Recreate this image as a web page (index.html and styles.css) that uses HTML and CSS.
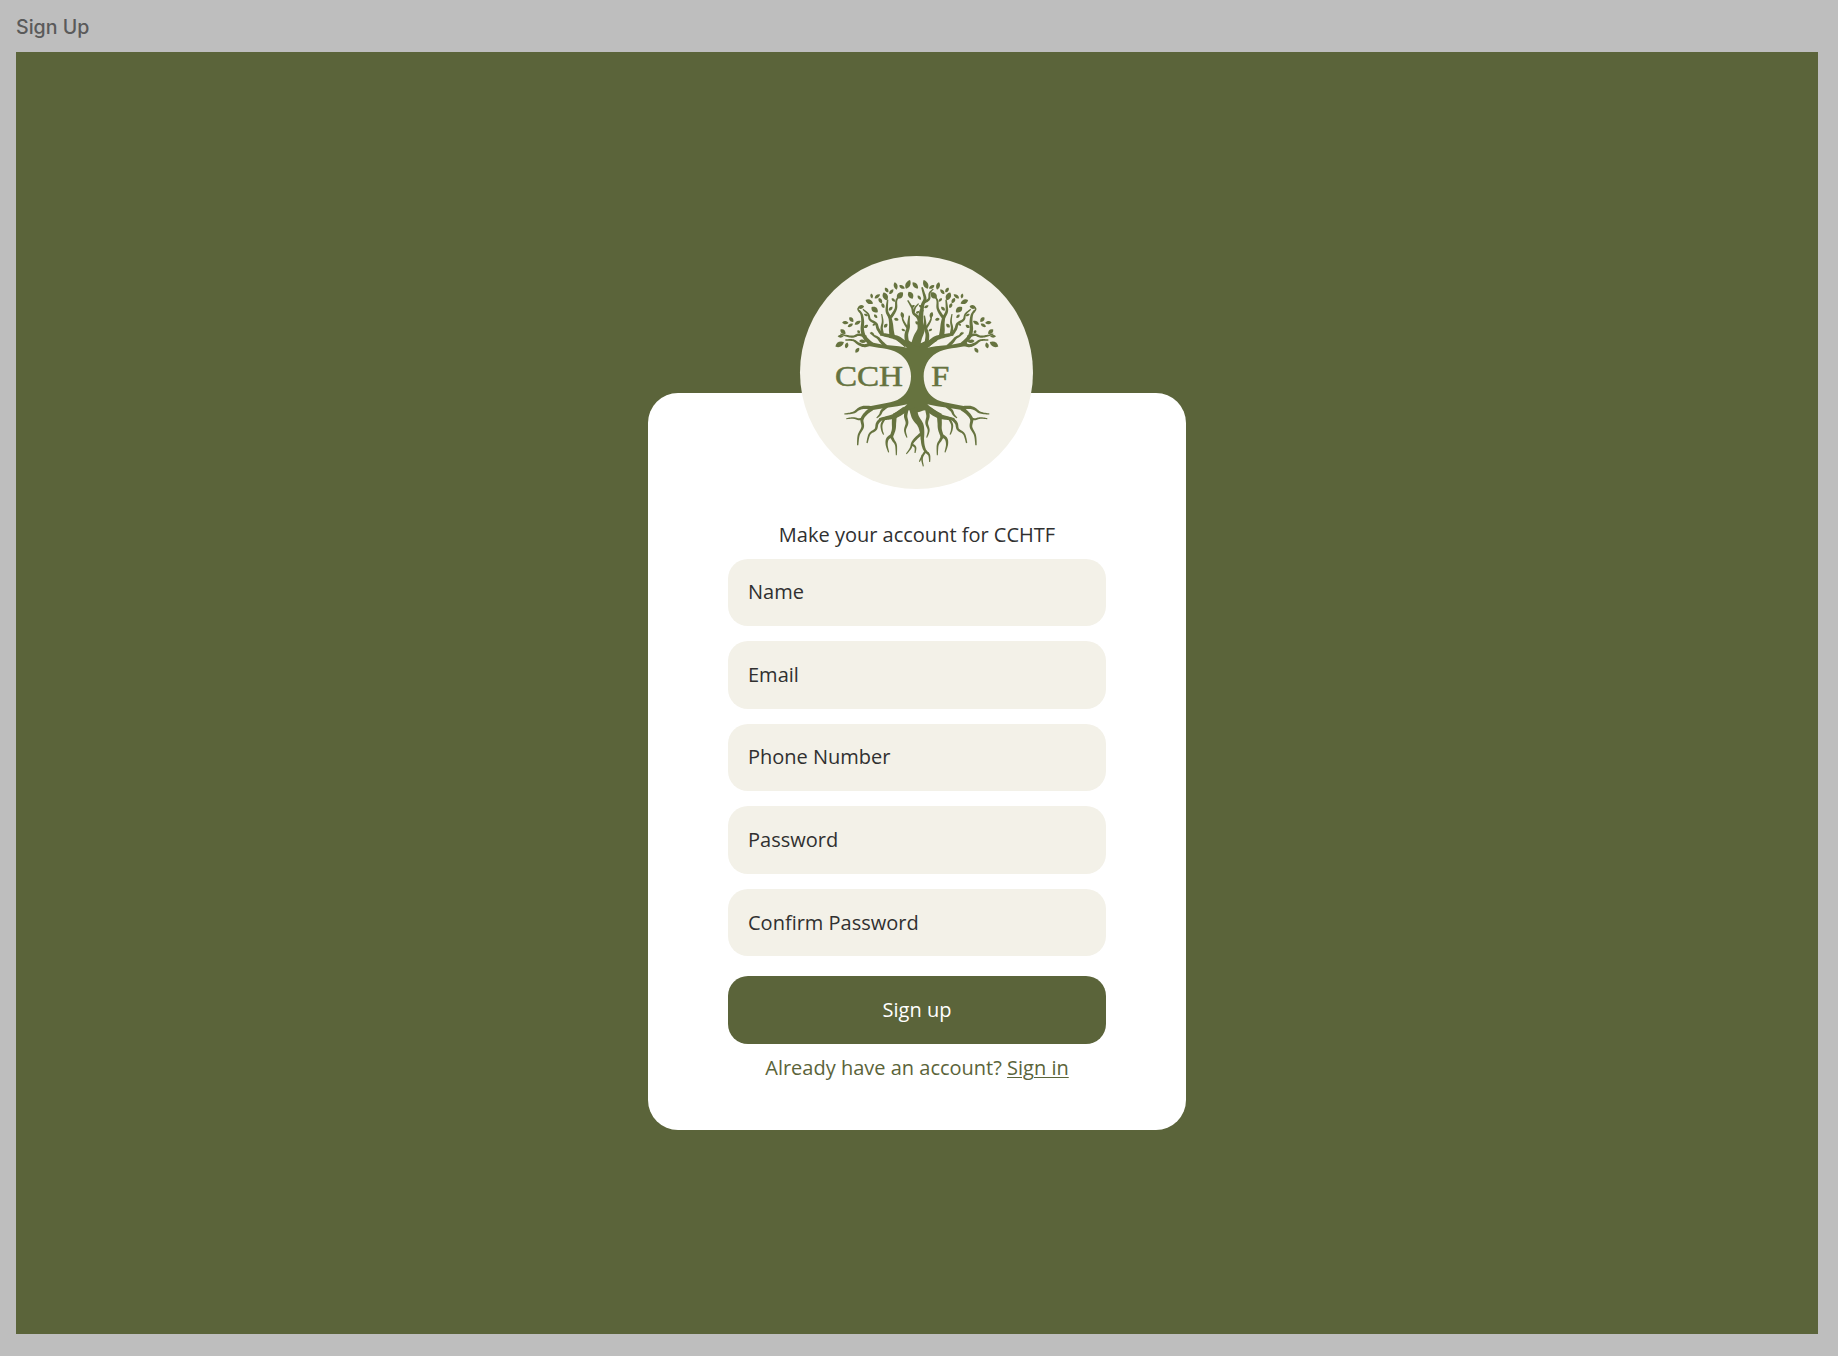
FILE: index.html
```html
<!DOCTYPE html>
<html lang="en">
<head>
<meta charset="utf-8">
<title>Sign Up</title>
<link rel="stylesheet" href="styles.css">
</head>
<body>
<div class="frame-label">Sign Up</div>
<main class="frame">
  <form class="card">
    <div class="logo">
      <svg class="tree" viewBox="30 29 699 699" role="img" aria-label="CCHTF">
        <g id="tree-half">
          <path d="M383 289C374 293 364 289 356 282L349 284C340 282 334 276 326 273L322 283C332 289 342 295 351 304C325 298 268 298 238 285L228 297C260 306 298 305 324 320C350 335 363 362 363 390C363 420 350 448 322 461C295 472 262 473 232 482L238 493C265 488 315 482 352 474C340 486 325 494 308 503L316 516C328 506 345 500 353 493C362 489 372 498 383 498Z"/>
        </g>
        <use href="#tree-half" transform="translate(764 0) scale(-1 1)"/>
        <g id="branches"></g>
        <text x="135" y="418" textLength="204" lengthAdjust="spacingAndGlyphs">CCH</text>
        <text x="424" y="418" textLength="54" lengthAdjust="spacingAndGlyphs">F</text>
      </svg>
    </div>
    <p class="title">Make your account for CCHTF</p>
    <div class="fields">
      <div class="field">Name</div>
      <div class="field">Email</div>
      <div class="field">Phone Number</div>
      <div class="field">Password</div>
      <div class="field">Confirm Password</div>
    </div>
    <button class="submit" type="button">Sign up</button>
    <p class="signin">Already have an account? <a href="#">Sign in</a></p>
  </form>
</main>
<script src="tree.js"></script>
</body>
</html>
```
FILE: styles.css
```css
* { box-sizing: border-box; }

body {
  margin: 0;
  height: 1356px;
  padding: 0 20px 0 16px;
  background: #bebebe;
  font-family: "Open Sans", sans-serif;
  font-size: 20px;
  line-height: 28px;
  color: #303030;
  overflow: hidden;
}

.frame-label {
  height: 52px;
  padding-top: 13px;
  font-family: Inter, sans-serif;
  font-size: 19.6px;
  font-weight: 500;
  color: #5a5a5a;
}

.frame {
  height: 1282px;
  padding-top: 340.5px;
  background: #5b643a;
}

.card {
  position: relative;
  display: flex;
  flex-direction: column;
  align-items: center;
  width: 538px;
  height: 737px;
  margin: 0 auto;
  padding-top: 128px;
  border-radius: 30px;
  background: #fff;
}

.logo {
  position: absolute;
  top: -136.5px;
  left: 152px;
  width: 233px;
  height: 233px;
  border-radius: 50%;
  background: #f3f1e8;
}

.tree { display: block; width: 100%; height: 100%; fill: #66733f; }

.tree text {
  font-family: "Liberation Serif", serif;
  font-size: 88px;
  stroke: #66733f;
  stroke-width: 1.6px;
}

.title { margin: 0 0 10px; }

.fields { display: grid; gap: 15px; width: 378px; }

.field {
  display: flex;
  align-items: center;
  height: 67.6px;
  padding: 0 20px;
  border-radius: 20px;
  background: #f3f1e8;
}

.submit {
  width: 378px;
  height: 67.6px;
  margin-top: 20px;
  border: 0;
  border-radius: 20px;
  background: #5b643a;
  color: #fff;
  font: inherit;
}

.signin { margin: 10px 0 0; color: #5b643a; }
.signin a { color: inherit; text-underline-offset: 2px; text-decoration-thickness: 1px; }
```
FILE: tree.js
```js
const NS = "http://www.w3.org/2000/svg";
const group = document.getElementById("branches");
const AXIS = 761;

function add(d) {
  const p = document.createElementNS(NS, "path");
  p.setAttribute("d", d);
  group.appendChild(p);
}

// Tapered ribbon along a smooth curve through the points.
function limb(w0, w1, pts) {
  const at = i => pts[Math.max(0, Math.min(pts.length - 1, i))];
  const line = [];
  for (let i = 0; i < pts.length - 1; i++) {
    const [a, b, c, e] = [at(i - 1), at(i), at(i + 1), at(i + 2)];
    for (let s = 0; s < 8; s++) {
      const t = s / 8;
      line.push([0, 1].map(k => 0.5 * (2 * b[k] + (c[k] - a[k]) * t +
        (2 * a[k] - 5 * b[k] + 4 * c[k] - e[k]) * t * t +
        (3 * b[k] - a[k] - 3 * c[k] + e[k]) * t * t * t)));
    }
  }
  line.push(pts[pts.length - 1]);
  const left = [], right = [];
  line.forEach((p, i) => {
    const q = line[Math.max(0, i - 1)], r = line[Math.min(line.length - 1, i + 1)];
    const dx = r[0] - q[0], dy = r[1] - q[1], n = Math.hypot(dx, dy) || 1;
    const w = (w0 + (w1 - w0) * Math.pow(i / (line.length - 1), 1.5) + 1) / 2;
    left.push([p[0] - dy / n * w, p[1] + dx / n * w]);
    right.unshift([p[0] + dy / n * w, p[1] - dx / n * w]);
  });
  add("M" + left.concat(right).map(p => p.map(v => v.toFixed(1)).join(" ")).join("L") + "Z");
}

// Pointed leaf: centre, length, width, angle in degrees.
function leaf(x, y, len, wid, deg) {
  const a = deg * Math.PI / 180, h = len / 2;
  const P = (u, v) => (x + u * Math.cos(a) - v * Math.sin(a)).toFixed(1) + " " +
    (y + u * Math.sin(a) + v * Math.cos(a)).toFixed(1);
  add(`M${P(-h, 0)}C${P(-h * .5, -wid * .68)} ${P(h * .4, -wid * .68)} ${P(h, 0)}C${P(h * .4, wid * .68)} ${P(-h * .5, wid * .68)} ${P(-h, 0)}Z`);
}

const limbs = [
  [15, 7, [[350, 297], [325, 277], [300, 269], [272, 264]]],
  [8, 3, [[276, 266], [264, 248], [258, 232], [240, 220], [235, 204], [219, 189]]],
  [15, 7, [[307, 272], [304, 252], [303, 232], [299, 208]]],
  [8, 3, [[300, 214], [291, 196], [291, 178], [293, 160]]],
  [8, 3, [[302, 213], [311, 200], [318, 185], [319, 163], [327, 150]]],
  [7, 2, [[278, 263], [275, 245], [278, 225], [275, 203]]],
  [11, 3, [[351, 288], [349, 265], [355, 243], [356, 226], [358, 208]]],
  [6, 2, [[354, 246], [345, 233], [338, 218], [337, 200]]],
  [11, 4, [[246, 295], [224, 273], [217, 250], [218, 225], [215, 205], [207, 192]]],
  [4, 2, [[210, 198], [204, 188], [211, 181], [218, 182]]],
  [9, 3, [[242, 293], [223, 298], [205, 292], [190, 282], [166, 281]]],
  [7, 3, [[229, 272], [207, 265], [189, 271], [168, 268], [151, 263]]],
  [9, 2, [[288, 300], [275, 288], [264, 275], [252, 268], [240, 259]]],
  [10, 2, [[246, 485], [225, 483], [208, 487], [190, 499], [163, 503]]],
  [10, 3, [[246, 487], [228, 501], [216, 519], [218, 542], [206, 567], [203, 597]]],
  [6, 2, [[220, 515], [207, 519], [190, 515], [169, 517]]],
  [8, 2, [[291, 480], [276, 493], [270, 505], [260, 515]]],
  [17, 6, [[345, 489], [316, 508], [295, 514], [268, 519]]],
  [8, 3, [[274, 517], [262, 531], [257, 549], [239, 563], [231, 590]]],
  [6, 2, [[285, 515], [275, 534], [276, 552], [281, 565]]],
  [13, 8, [[313, 510], [312, 530], [311, 550], [303, 574]]],
  [9, 2, [[307, 567], [293, 577], [290, 595], [296, 618]]],
  [8, 2, [[304, 570], [310, 582], [318, 597], [319, 627]]],
  [10, 2, [[350, 490], [347, 510], [351, 530], [345, 552], [351, 574]]]
];
const leaves = [
  [317, 119, 23, 11, 75], [290, 131, 17, 9, 55], [336, 122, 19, 9, 30], [354, 114, 29, 14, -65],
  [286, 150, 26, 15, 65], [304, 136, 19, 9, -50], [330, 147, 25, 16, -45], [310, 161, 14, 8, 45],
  [245, 149, 15, 8, 80], [262, 150, 20, 9, -35], [238, 166, 25, 13, 25], [271, 163, 18, 10, 60],
  [254, 190, 24, 16, 40], [279, 178, 16, 9, 65], [257, 210, 14, 8, 45], [213, 182, 19, 11, -15],
  [302, 187, 16, 9, -45], [319, 219, 14, 9, 15], [337, 206, 19, 10, 75], [228, 206, 13, 7, 25],
  [184, 220, 18, 11, 50], [166, 229, 19, 9, 5], [181, 237, 18, 9, -30], [203, 229, 21, 10, -30],
  [159, 256, 20, 12, 40], [149, 294, 29, 15, -28], [170, 297, 18, 10, -75], [202, 312, 18, 10, -55],
  [152, 270, 18, 8, 0], [218, 285, 21, 10, 5], [228, 240, 15, 9, -35], [248, 262, 16, 6, 50],
  [206, 256, 11, 8, 55], [340, 251, 12, 7, 30], [287, 238, 15, 9, -45], [369, 180, 12, 8, -30],
  [252, 235, 10, 6, -30]
];
limbs.forEach(([a, b, p]) => {
  limb(a, b, p);
  limb(a, b, p.map(([x, y]) => [AXIS - x, y]));
});
leaves.forEach(([x, y, l, w, d]) => {
  leaf(x, y, l, w, d);
  leaf(AXIS - x, y, l, w, 180 - d);
});

// Middle of the crown and the tap root are not mirrored.
limb(27, 10, [[376, 299], [383, 274], [393, 250], [391, 225], [395, 190]]);
limb(10, 4, [[395, 195], [398, 175], [405, 158], [401, 140], [396, 123]]);
limb(7, 2, [[402, 168], [417, 158], [419, 140], [430, 128]]);
limb(9, 3, [[392, 230], [383, 212], [371, 201], [366, 184], [353, 162]]);
limb(5, 2, [[371, 198], [376, 183], [386, 172]]);
leaf(376, 117, 25, 12, 50);
leaf(362, 147, 24, 15, 60);
leaf(388, 154, 16, 8, 50);
leaf(381, 230, 13, 8, 45);
leaf(409, 181, 15, 8, -25);
leaf(383, 198, 12, 7, -30);
limb(22, 8, [[369, 486], [376, 512], [391, 535], [396, 556], [397, 580]]);
limb(9, 5, [[397, 576], [399, 595], [405, 612], [415, 622]]);
limb(6, 2, [[412, 619], [418, 628], [419, 647]]);
limb(6, 2, [[406, 616], [397, 629], [388, 646]]);
limb(5, 2, [[398, 626], [396, 640], [400, 660]]);
limb(8, 2, [[395, 561], [377, 577], [367, 590], [362, 605], [349, 623]]);
limb(6, 2, [[365, 594], [376, 603], [375, 620]]);
```
